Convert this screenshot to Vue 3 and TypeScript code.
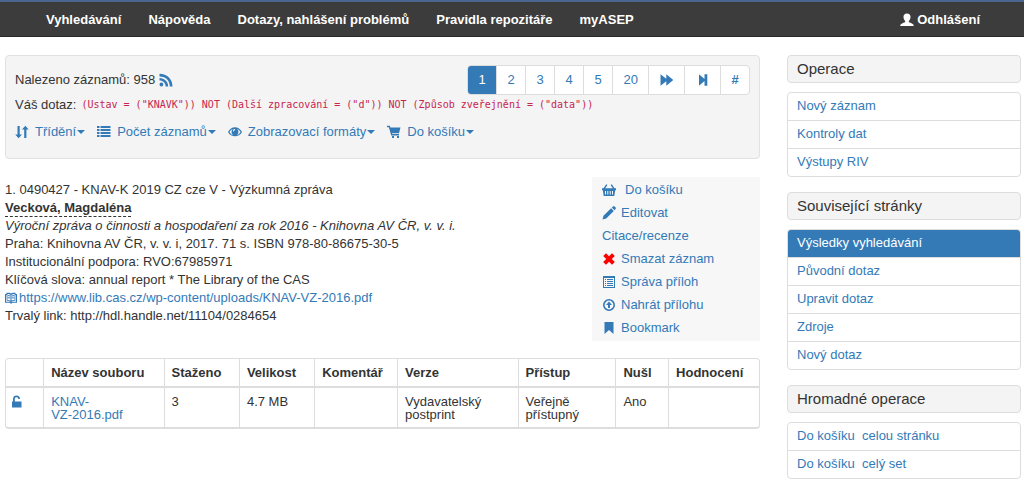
<script setup lang="ts">
import { h, type FunctionalComponent } from 'vue'

type IconDef = { d: string; evenodd?: boolean }

const icons: Record<string, IconDef> = {
  user: { d: 'M7 0.500C9.300 0.500 10.500 2 10.500 4C10.500 5.800 9.700 7.200 8.800 8V9C9.200 9.800 13.800 10 13.800 13H0.200C0.200 10 4.800 9.800 5.200 9V8C4.300 7.200 3.500 5.800 3.500 4C3.500 2 4.700 0.500 7 0.500Z' },
  rss: { d: 'M0.500 0.800C8 0.800 13.500 6 13.500 13.500H10.800C10.800 7.600 6.800 3.500 0.500 3.500ZM0.500 5C5.400 5 9.200 8.600 9.200 13.500H6.600C6.600 10.200 4.100 7.600 0.500 7.600ZM2.400 9.600A1.900 1.900 0 1 1 2.400 13.400A1.900 1.900 0 0 1 2.400 9.600Z' },
  sort: { d: 'M2.500 1H4.700V9.500H7L3.600 13.200L0.200 9.500H2.500ZM9.200 13V4.500H6.900L10.300 0.800L13.700 4.500H11.400V13Z' },
  list: { d: 'M0 1H2.500V3H0ZM3.500 1H13.500V3H3.500ZM0 4H2.500V6H0ZM3.500 4H13.500V6H3.500ZM0 7H2.500V9H0ZM3.500 7H13.500V9H3.500ZM0 10H2.500V12H0ZM3.500 10H13.500V12H3.500Z' },
  eye: { d: 'M0 7C3 0.700 11 0.700 14 7C11 12.800 3 12.800 0 7ZM1.500 7C2.300 8.600 3.500 9.700 5 10.200C3.100 8.500 3.100 5.500 4.700 3.900C3.300 4.500 2.200 5.500 1.500 7ZM12.500 7C11.800 5.500 10.700 4.500 9.300 3.900C10.900 5.500 10.900 8.500 9 10.200C10.500 9.700 11.700 8.600 12.500 7ZM6.700 4.100C5.500 4.200 4.900 5.100 5 6.200C5.300 6.700 6 6.500 6.100 6C6.200 5.500 6.500 5.200 7.100 5.100C7.500 4.800 7.200 4.100 6.700 4.100Z', evenodd: true },
  cart: { d: 'M0 0.800H2.800L3.400 2.500H13.500L12 8.200H4.900L5.200 9H12V10.500H4.200L1.900 2.300H0ZM5 11H7V13H5ZM10 11H12V13H10Z' },
  forward: { d: 'M0.500 1.200L6.300 5.800V1.200L13.300 7L6.300 12.800V8.200L0.500 12.800Z' },
  end: { d: 'M3 1.200L8.500 6V1.200H11.300V12.800H8.500V8L3 12.800Z' },
  basket: { d: 'M4.200 1.200L5.400 1.900L3.200 5.200H10.800L8.600 1.900L9.800 1.200L12.500 5.200H14V7.200H13.200L12.300 13H1.700L0.800 7.200H0V5.200H1.500ZM3 8V11.500H4V8ZM5.300 8V11.500H6.300V8ZM7.700 8V11.500H8.700V8ZM10 8V11.500H11V8Z', evenodd: true },
  pencil: { d: 'M0.500 13.500L1.500 9.800L9.100 2.300L11.800 5L4.200 12.500ZM9.800 1.600L11 0.500C11.600 0 12.200 0 12.700 0.500L13.600 1.400C14.100 1.900 14 2.500 13.500 3L12.500 4.200Z' },
  remove: { d: 'M1.200 4L4 1.200L7 4.200L10 1.200L12.800 4L9.800 7L12.800 10L10 12.800L7 9.800L4 12.800L1.200 10L4.200 7Z' },
  form: { d: 'M1 1H13V13H1ZM2 3V12H12V3ZM3 4H4V5H3ZM5 4H11V5H5ZM3 6H4V7H3ZM5 6H11V7H5ZM3 8H4V9H3ZM5 8H11V9H5ZM3 10H4V11H3ZM5 10H11V11H5Z', evenodd: true },
  upload: { d: 'M7 1A6 6 0 1 1 7 13A6 6 0 0 1 7 1ZM7 2.600A4.400 4.400 0 1 0 7 11.400A4.400 4.400 0 0 0 7 2.600ZM7 3.600L10 7H8V10H6V7H4Z', evenodd: true },
  bookmark: { d: 'M2.500 1H11.500V13L7 9L2.500 13Z' },
  book: { d: 'M0 2.200H1.700V1H5C6 1 6.700 1.500 7 2C7.300 1.500 8 1 9 1H12.300V2.200H14V12.500H8.600L7.700 13.500H6.300L5.400 12.500H0ZM1.200 3.500V11.300H5.800L6.500 12V11.500C5 10.500 3.500 10.300 1.900 10.300V3.500ZM12.800 3.500H12.100V10.300C10.500 10.300 9 10.500 7.500 11.500V12L8.200 11.300H12.800ZM2.900 2.200V9.200C4.500 9.200 5.700 9.500 6.400 10V3.200C5.700 2.400 4.500 2.200 2.900 2.200ZM11.100 2.200C9.500 2.200 8.300 2.400 7.600 3.200V10C8.300 9.500 9.500 9.200 11.100 9.200ZM3.400 3.500L6 4V5.200L3.400 4.700ZM3.400 6L6 6.500V7.700L3.400 7.200ZM10.600 3.500V4.700L8 5.200V4ZM10.600 6V7.200L8 7.700V6.500Z', evenodd: true },
  unlock: { d: 'M2 6.500V4C2 1.500 3.700 0.500 5.500 0.500S9 1.500 9 4H7.200C7.200 2.800 6.500 2.200 5.500 2.200S3.800 2.800 3.800 4V6.500H10.500V12.500H1V6.500Z' },
}

const Icon: FunctionalComponent<{ name: string }> = (props) =>
  h('svg', { class: 'icon', viewBox: '0 0 14 14', width: 14, height: 14, 'aria-hidden': 'true' }, [
    h('path', {
      d: icons[props.name].d,
      fill: 'currentColor',
      'fill-rule': icons[props.name].evenodd ? 'evenodd' : 'nonzero',
    }),
  ])
Icon.props = ['name']

const navLinks = ['Vyhledávání', 'Nápověda', 'Dotazy, nahlášení problémů', 'Pravidla repozitáře', 'myASEP']

const pages = ['1', '2', '3', '4', '5', '20']

const menus = [
  { icon: 'sort', label: 'Třídění' },
  { icon: 'list', label: 'Počet záznamů' },
  { icon: 'eye', label: 'Zobrazovací formáty' },
  { icon: 'cart', label: 'Do košíku' },
]

const actions = [
  { icon: 'basket', label: 'Do košíku' },
  { icon: 'pencil', label: 'Editovat' },
  { icon: '', label: 'Citace/recenze' },
  { icon: 'remove', label: 'Smazat záznam' },
  { icon: 'form', label: 'Správa příloh' },
  { icon: 'upload', label: 'Nahrát přílohu' },
  { icon: 'bookmark', label: 'Bookmark' },
]

const sections = [
  { title: 'Operace', active: -1, links: ['Nový záznam', 'Kontroly dat', 'Výstupy RIV'] },
  {
    title: 'Související stránky',
    active: 0,
    links: ['Výsledky vyhledávání', 'Původní dotaz', 'Upravit dotaz', 'Zdroje', 'Nový dotaz'],
  },
  { title: 'Hromadné operace', active: -1, links: ['Do košíku\u00a0 celou stránku', 'Do košíku\u00a0 celý set'] },
]
</script>

<template>
  <div class="page">
    <header class="navbar">
      <nav class="nav-links">
        <a v-for="l in navLinks" :key="l" href="#">{{ l }}</a>
      </nav>
      <a href="#" class="logout"><Icon name="user" />Odhlášení</a>
    </header>

    <div class="layout">
      <main>
        <section class="toolbar">
          <div class="found-row">
            <div class="found">
              Nalezeno záznamů: 958
              <a href="#" class="rss" aria-label="RSS"><Icon name="rss" /></a>
            </div>
            <nav class="pagination" aria-label="Stránkování">
              <a v-for="p in pages" :key="p" href="#" :class="{ current: p === '1' }">{{ p }}</a>
              <a href="#" aria-label="Další"><Icon name="forward" /></a>
              <a href="#" aria-label="Poslední"><Icon name="end" /></a>
              <a href="#" class="hash">#</a>
            </nav>
          </div>
          <div class="query">
            Váš dotaz:
            <code>(Ustav = ("KNAVK")) NOT (Další zpracování = ("d")) NOT (Způsob zveřejnění = ("data"))</code>
          </div>
          <div class="menus">
            <button v-for="m in menus" :key="m.label" type="button">
              <Icon :name="m.icon" /><span>{{ m.label }}</span><i class="caret"></i>
            </button>
          </div>
        </section>

        <section class="record">
          <div class="details">
            <div>1. 0490427 - KNAV-K 2019 CZ cze V - Výzkumná zpráva</div>
            <div><b class="author">Vecková, Magdaléna</b></div>
            <div><em>Výroční zpráva o činnosti a hospodaření za rok 2016 - Knihovna AV ČR, v. v. i.</em></div>
            <div>Praha: Knihovna AV ČR, v. v. i, 2017. 71 s. ISBN 978-80-86675-30-5</div>
            <div>Institucionální podpora: RVO:67985971</div>
            <div>Klíčová slova: annual report * The Library of the CAS</div>
            <div>
              <a href="#" class="source"><Icon name="book" />https://www.lib.cas.cz/wp-content/uploads/KNAV-VZ-2016.pdf</a>
            </div>
            <div>Trvalý link: http://hdl.handle.net/11104/0284654</div>
          </div>
          <ul class="actions">
            <li v-for="a in actions" :key="a.label">
              <a href="#" :class="a.icon"><Icon v-if="a.icon" :name="a.icon" /><span>{{ a.label }}</span></a>
            </li>
          </ul>
        </section>

        <div class="files">
          <table>
            <colgroup>
              <col class="w5" /><col class="w16" /><col class="w10" /><col class="w10" /><col class="w11" />
              <col class="w16" /><col class="w13" /><col class="w7" /><col />
            </colgroup>
            <thead>
              <tr>
                <th></th>
                <th>Název souboru</th>
                <th>Staženo</th>
                <th>Velikost</th>
                <th>Komentář</th>
                <th>Verze</th>
                <th>Přístup</th>
                <th>Nušl</th>
                <th>Hodnocení</th>
              </tr>
            </thead>
            <tbody>
              <tr>
                <td class="lock"><Icon name="unlock" /></td>
                <td><a href="#">KNAV-<br />VZ-2016.pdf</a></td>
                <td>3</td>
                <td>4.7 MB</td>
                <td></td>
                <td>Vydavatelský<br />postprint</td>
                <td>Veřejně<br />přístupný</td>
                <td>Ano</td>
                <td></td>
              </tr>
            </tbody>
          </table>
        </div>
      </main>

      <aside>
        <section v-for="s in sections" :key="s.title">
          <h2>{{ s.title }}</h2>
          <ul class="side-list">
            <li v-for="(l, i) in s.links" :key="l">
              <a href="#" :class="{ active: i === s.active }">{{ l }}</a>
            </li>
          </ul>
        </section>
      </aside>
    </div>
  </div>
</template>

<style>
body {
  background: #fff;
}
</style>

<style scoped>
.page {
  font-family: "Liberation Sans", Arial, sans-serif;
  font-size: 13px;
  line-height: 18px;
  color: #333;
}
a {
  color: #337ab7;
  text-decoration: none;
}
ul {
  list-style: none;
  margin: 0;
  padding: 0;
}
.icon {
  flex: none;
  display: block;
}

.navbar {
  display: flex;
  align-items: center;
  justify-content: space-between;
  padding: 9px 44px 7px 46px;
  background: #3c3c3c;
  border-top: 2px solid #4a6690;
  border-bottom: 1px solid #2a2a2a;
  font-weight: bold;
}
.nav-links {
  display: flex;
  gap: 27px;
}
.navbar a {
  color: #fff;
}
.logout {
  display: flex;
  align-items: center;
  gap: 3px;
}

.layout {
  display: grid;
  grid-template-columns: 755fr 234fr;
  gap: 27px;
  padding: 18px 3px 0 5px;
}

.toolbar {
  background: #f4f4f4;
  border: 1px solid #e1e1e1;
  border-radius: 4px;
  padding: 9px 9px 17px;
}
.found-row {
  display: flex;
  justify-content: space-between;
}
.found {
  display: flex;
  align-items: center;
  gap: 4px;
}
.pagination {
  display: flex;
  flex: 0 0 283px;
  box-sizing: border-box;
  background: #fff;
  border: 1px solid #ddd;
  border-radius: 4px;
  overflow: hidden;
}
.pagination a {
  display: flex;
  flex: 1 0 auto;
  align-items: center;
  justify-content: center;
  padding: 5px 10px;
}
.pagination a + a {
  border-left: 1px solid #ddd;
}
.pagination a.current {
  background: #337ab7;
  color: #fff;
}
.hash {
  font-weight: bold;
}
.query {
  display: flex;
  align-items: center;
  gap: 5px;
  margin-top: 1px;
}
code {
  font-family: "DejaVu Sans Mono", monospace;
  font-size: 10px;
  color: #c7254e;
}
.menus {
  display: flex;
  gap: 12px;
  margin-top: 9px;
}
.menus button {
  display: flex;
  align-items: center;
  border: 0;
  padding: 0;
  background: none;
  font: inherit;
  color: #337ab7;
}
.menus span {
  margin: 0 1px 0 6px;
}
.caret {
  border: 4px solid transparent;
  border-top-color: currentColor;
  border-bottom: 0;
}

.record {
  display: flex;
  justify-content: space-between;
  margin-top: 18px;
}
.details {
  padding-top: 4px;
}
.author {
  display: inline-block;
  line-height: 16px;
  border-bottom: 1px dashed #333;
}
.source {
  display: flex;
  align-items: center;
}
.source .icon {
  width: 12px;
  height: 12px;
  margin-right: 2px;
}
.actions {
  flex: 0 0 168px;
  box-sizing: border-box;
  padding: 1px 10px 2px;
  background: #f7f7f7;
}
.actions a {
  display: flex;
  align-items: center;
  gap: 5px;
  line-height: 23px;
}
.actions .basket {
  gap: 9px;
}
.actions .remove .icon {
  color: #f00;
}

.files {
  margin-top: 17px;
  border: 1px solid #ddd;
  border-bottom-width: 2px;
  border-radius: 4px;
}
table {
  width: 100%;
  table-layout: fixed;
  border-collapse: collapse;
}
.w5 { width: 5%; }
.w7 { width: 7%; }
.w10 { width: 10%; }
.w11 { width: 11%; }
.w13 { width: 13%; }
.w16 { width: 16%; }
th,
td {
  padding: 5px 7px 4px;
  text-align: left;
  vertical-align: top;
  white-space: nowrap;
}
th {
  border-bottom: 2px solid #ddd;
}
td {
  line-height: 13px;
  padding: 7px 7px 6px;
}
th + th,
td + td {
  border-left: 1px solid #ddd;
}
.lock {
  padding-left: 5px;
  color: #337ab7;
}

h2 {
  margin: 0 0 9px;
  padding: 4px 9px;
  background: #f4f4f4;
  border: 1px solid #ddd;
  border-radius: 4px;
  font-size: 15px;
  font-weight: normal;
  line-height: 18px;
}
.side-list {
  border: 1px solid #ddd;
  border-radius: 4px;
  overflow: hidden;
}
.side-list a {
  display: block;
  padding: 4px 9px 5px;
}
.side-list li + li {
  border-top: 1px solid #ddd;
}
.side-list a.active {
  background: #337ab7;
  color: #fff;
}
aside section + section {
  margin-top: 15px;
}
</style>
